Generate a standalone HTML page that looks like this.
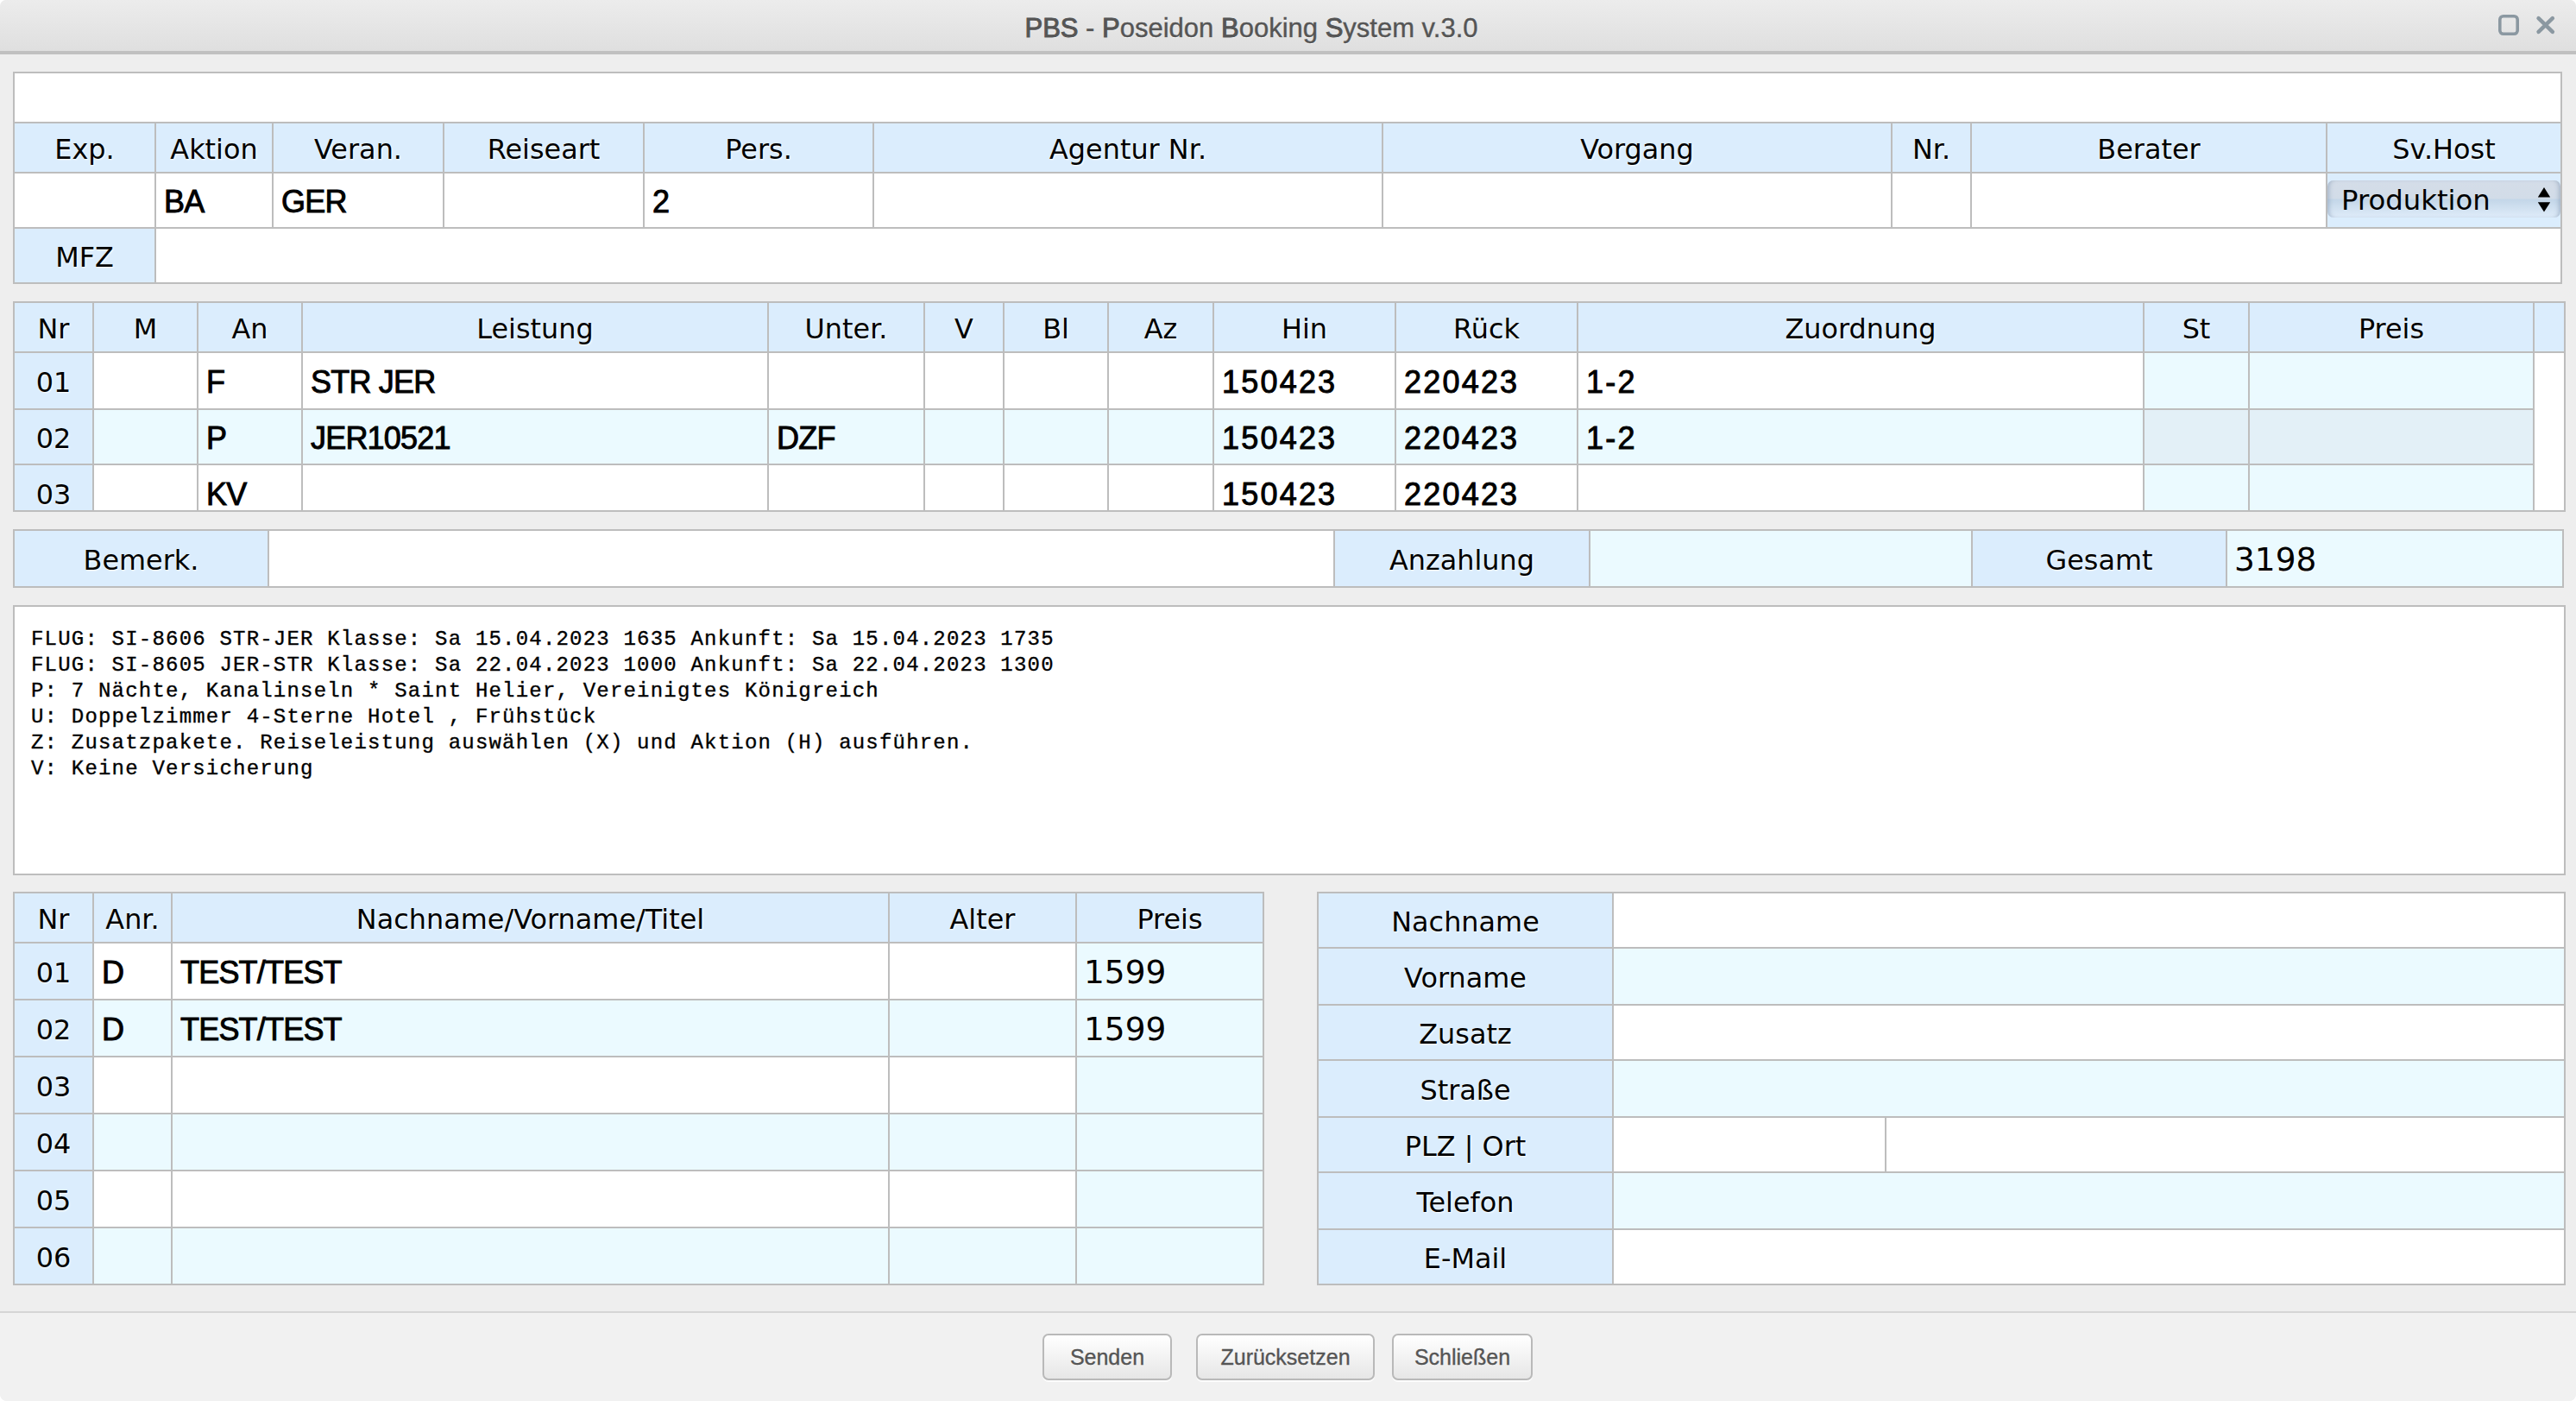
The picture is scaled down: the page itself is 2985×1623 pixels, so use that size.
<!DOCTYPE html>
<html lang="de"><head><meta charset="utf-8"><title>PBS - Poseidon Booking System v.3.0</title>
<style>
html,body{margin:0;padding:0}
html{background:#fff}
body{width:2985px;height:1623px;overflow:hidden;background:#eeeeee;border-radius:7px 7px 8px 8px;position:relative;font-family:"DejaVu Sans","Liberation Sans",sans-serif;color:#000}
div,pre,svg,span{box-sizing:border-box}
body>div,body>pre,body>svg,.clip>div{position:absolute}
.clip{overflow:hidden}
.c{display:flex;align-items:center;white-space:nowrap;overflow:hidden}
.lab{justify-content:center;font-size:31.9px;text-shadow:1px 1px 2px #fff;padding-top:3px}
.val{justify-content:flex-start;font-family:"Liberation Sans",sans-serif;font-size:36px;letter-spacing:-0.8px;padding-left:9px;padding-top:3px;-webkit-text-stroke:0.95px #000}
.num{letter-spacing:2.2px}
.big{justify-content:flex-start;font-size:37.5px;padding-left:8px;padding-top:2px;text-shadow:1px 1px 1px #fff}
#tb{left:0;top:0;width:2985px;height:59px;background:linear-gradient(#ececec,#dfdfdf);text-align:center;border-radius:7px 7px 0 0}
#tt{position:absolute;left:0;width:2900px;top:13px;text-align:center;font-family:"Liberation Sans",sans-serif;font-size:31px;line-height:40px;color:#555;text-shadow:0 1px 0 #fff;-webkit-text-stroke:0.4px #555}
#tt b{font-weight:normal;-webkit-text-stroke:1.0px #555}
#tbb{left:0;top:59px;width:2985px;height:4px;background:#c0c0c0}
#sel{left:2697px;top:209px;width:270px;height:43px}
#selb{position:absolute;left:0;top:0;width:270px;height:43px;border-radius:7px;background:linear-gradient(#d4dde8 0%,#d2dce8 49%,#c3d6e8 51%,#dfecf9 100%);box-shadow:inset 5px 0 5px -3px rgba(130,150,175,.55),inset -5px 0 5px -3px rgba(130,150,175,.55)}
#sel span{position:absolute;left:16px;top:2px;line-height:43px;font-size:32.3px}
#sel svg{position:absolute;left:243px;top:7.6px}
#ta{margin:0;background:#fff;font-family:"Liberation Mono",monospace;font-size:24px;letter-spacing:1.2px;-webkit-text-stroke:0.35px #000;line-height:30px;padding:23px 0 0 19px;color:#000}
.btn{border:2px solid #b9b9b9;border-radius:7px;background:linear-gradient(#ffffff,#e6e6e6);font-family:"Liberation Sans",sans-serif;font-size:25px;color:#555;-webkit-text-stroke:0.35px #555;display:flex;align-items:center;justify-content:center;box-shadow:0 2px 0 rgba(255,255,255,.8)}
</style></head>
<body>
<div id="tb"><span id="tt"><b>PBS</b> - <b>P</b>oseidon <b>B</b>ooking <b>S</b>ystem v.3.0</span></div>
<div id="tbb"></div>
<svg id="ic" width="80" height="40" viewBox="0 0 80 40" style="left:2890px;top:9px"><rect x="6.8" y="9.7" width="20.4" height="20.6" rx="4" ry="4" fill="none" stroke="#8b98a1" stroke-width="3.6"/><path d="M51.6 12.2 L67.8 27.8 M67.8 12.2 L51.6 27.8" stroke="#8b98a1" stroke-width="4.6" stroke-linecap="round" fill="none"/></svg>
<div style="left:15px;top:83px;width:2954px;height:246px;background:#bdbdbd;"></div>
<div class="c lab" style="left:17px;top:85px;width:2950px;height:56px;background:#fff;"></div>
<div class="c lab" style="left:17px;top:143px;width:162px;height:56px;background:#dbedfd;">Exp.</div>
<div class="c lab" style="left:181px;top:143px;width:134px;height:56px;background:#dbedfd;">Aktion</div>
<div class="c lab" style="left:317px;top:143px;width:196px;height:56px;background:#dbedfd;">Veran.</div>
<div class="c lab" style="left:515px;top:143px;width:230px;height:56px;background:#dbedfd;">Reiseart</div>
<div class="c lab" style="left:747px;top:143px;width:264px;height:56px;background:#dbedfd;">Pers.</div>
<div class="c lab" style="left:1013px;top:143px;width:588px;height:56px;background:#dbedfd;">Agentur Nr.</div>
<div class="c lab" style="left:1603px;top:143px;width:588px;height:56px;background:#dbedfd;">Vorgang</div>
<div class="c lab" style="left:2193px;top:143px;width:90px;height:56px;background:#dbedfd;">Nr.</div>
<div class="c lab" style="left:2285px;top:143px;width:410px;height:56px;background:#dbedfd;">Berater</div>
<div class="c lab" style="left:2697px;top:143px;width:270px;height:56px;background:#dbedfd;">Sv.Host</div>
<div class="c val" style="left:17px;top:201px;width:162px;height:62px;background:#fff;"></div>
<div class="c val" style="left:181px;top:201px;width:134px;height:62px;background:#fff;">BA</div>
<div class="c val" style="left:317px;top:201px;width:196px;height:62px;background:#fff;">GER</div>
<div class="c val" style="left:515px;top:201px;width:230px;height:62px;background:#fff;"></div>
<div class="c val" style="left:747px;top:201px;width:264px;height:62px;background:#fff;">2</div>
<div class="c val" style="left:1013px;top:201px;width:588px;height:62px;background:#fff;"></div>
<div class="c val" style="left:1603px;top:201px;width:588px;height:62px;background:#fff;"></div>
<div class="c val" style="left:2193px;top:201px;width:90px;height:62px;background:#fff;"></div>
<div class="c val" style="left:2285px;top:201px;width:410px;height:62px;background:#fff;"></div>
<div class="c lab" style="left:2697px;top:201px;width:270px;height:62px;background:#dbedfd;"></div>
<div class="c lab" style="left:17px;top:265px;width:162px;height:62px;background:#dbedfd;">MFZ</div>
<div class="c lab" style="left:181px;top:265px;width:2786px;height:62px;background:#fff;"></div>
<div id="sel"><div id="selb"></div><span>Produktion</span><svg width="16" height="30" viewBox="0 0 16 30"><path d="M8 0 L15.2 11.4 L0.8 11.4 Z M8 28.6 L15.2 17.2 L0.8 17.2 Z" fill="#000"/></svg></div>
<div style="left:15px;top:349px;width:2958px;height:244px;background:#bdbdbd;"></div>
<div class="clip" style="left:15px;top:349px;width:2956px;height:242px">
<div class="c lab" style="left:2px;top:2px;width:90px;height:56px;background:#dbedfd;">Nr</div>
<div class="c lab" style="left:94px;top:2px;width:119px;height:56px;background:#dbedfd;">M</div>
<div class="c lab" style="left:215px;top:2px;width:119px;height:56px;background:#dbedfd;">An</div>
<div class="c lab" style="left:336px;top:2px;width:538px;height:56px;background:#dbedfd;">Leistung</div>
<div class="c lab" style="left:876px;top:2px;width:179px;height:56px;background:#dbedfd;">Unter.</div>
<div class="c lab" style="left:1057px;top:2px;width:90px;height:56px;background:#dbedfd;">V</div>
<div class="c lab" style="left:1149px;top:2px;width:119px;height:56px;background:#dbedfd;">Bl</div>
<div class="c lab" style="left:1270px;top:2px;width:120px;height:56px;background:#dbedfd;">Az</div>
<div class="c lab" style="left:1392px;top:2px;width:209px;height:56px;background:#dbedfd;">Hin</div>
<div class="c lab" style="left:1603px;top:2px;width:209px;height:56px;background:#dbedfd;">Rück</div>
<div class="c lab" style="left:1814px;top:2px;width:654px;height:56px;background:#dbedfd;">Zuordnung</div>
<div class="c lab" style="left:2470px;top:2px;width:120px;height:56px;background:#dbedfd;">St</div>
<div class="c lab" style="left:2592px;top:2px;width:328px;height:56px;background:#dbedfd;">Preis</div>
<div class="c lab" style="left:2922px;top:2px;width:34px;height:56px;background:#dbedfd;"></div>
<div class="c lab" style="left:2px;top:60px;width:90px;height:64px;background:#dbedfd;">01</div>
<div class="c val" style="left:94px;top:60px;width:119px;height:64px;background:#fff;"></div>
<div class="c val" style="left:215px;top:60px;width:119px;height:64px;background:#fff;">F</div>
<div class="c val" style="left:336px;top:60px;width:538px;height:64px;background:#fff;">STR JER</div>
<div class="c val" style="left:876px;top:60px;width:179px;height:64px;background:#fff;"></div>
<div class="c val" style="left:1057px;top:60px;width:90px;height:64px;background:#fff;"></div>
<div class="c val" style="left:1149px;top:60px;width:119px;height:64px;background:#fff;"></div>
<div class="c val" style="left:1270px;top:60px;width:120px;height:64px;background:#fff;"></div>
<div class="c val num" style="left:1392px;top:60px;width:209px;height:64px;background:#fff;">150423</div>
<div class="c val num" style="left:1603px;top:60px;width:209px;height:64px;background:#fff;">220423</div>
<div class="c val num" style="left:1814px;top:60px;width:654px;height:64px;background:#fff;">1-2</div>
<div class="c val" style="left:2470px;top:60px;width:120px;height:64px;background:#ebfaff;"></div>
<div class="c val" style="left:2592px;top:60px;width:328px;height:64px;background:#ebfaff;"></div>
<div class="c lab" style="left:2px;top:126px;width:90px;height:62px;background:#dbedfd;">02</div>
<div class="c val" style="left:94px;top:126px;width:119px;height:62px;background:#ebfaff;"></div>
<div class="c val" style="left:215px;top:126px;width:119px;height:62px;background:#ebfaff;">P</div>
<div class="c val" style="left:336px;top:126px;width:538px;height:62px;background:#ebfaff;">JER10521</div>
<div class="c val" style="left:876px;top:126px;width:179px;height:62px;background:#ebfaff;">DZF</div>
<div class="c val" style="left:1057px;top:126px;width:90px;height:62px;background:#ebfaff;"></div>
<div class="c val" style="left:1149px;top:126px;width:119px;height:62px;background:#ebfaff;"></div>
<div class="c val" style="left:1270px;top:126px;width:120px;height:62px;background:#ebfaff;"></div>
<div class="c val num" style="left:1392px;top:126px;width:209px;height:62px;background:#ebfaff;">150423</div>
<div class="c val num" style="left:1603px;top:126px;width:209px;height:62px;background:#ebfaff;">220423</div>
<div class="c val num" style="left:1814px;top:126px;width:654px;height:62px;background:#ebfaff;">1-2</div>
<div class="c val" style="left:2470px;top:126px;width:120px;height:62px;background:#e3f0f7;"></div>
<div class="c val" style="left:2592px;top:126px;width:328px;height:62px;background:#e3f0f7;"></div>
<div class="c lab" style="left:2px;top:190px;width:90px;height:64px;background:#dbedfd;">03</div>
<div class="c val" style="left:94px;top:190px;width:119px;height:64px;background:#fff;"></div>
<div class="c val" style="left:215px;top:190px;width:119px;height:64px;background:#fff;">KV</div>
<div class="c val" style="left:336px;top:190px;width:538px;height:64px;background:#fff;"></div>
<div class="c val" style="left:876px;top:190px;width:179px;height:64px;background:#fff;"></div>
<div class="c val" style="left:1057px;top:190px;width:90px;height:64px;background:#fff;"></div>
<div class="c val" style="left:1149px;top:190px;width:119px;height:64px;background:#fff;"></div>
<div class="c val" style="left:1270px;top:190px;width:120px;height:64px;background:#fff;"></div>
<div class="c val num" style="left:1392px;top:190px;width:209px;height:64px;background:#fff;">150423</div>
<div class="c val num" style="left:1603px;top:190px;width:209px;height:64px;background:#fff;">220423</div>
<div class="c val num" style="left:1814px;top:190px;width:654px;height:64px;background:#fff;"></div>
<div class="c val" style="left:2470px;top:190px;width:120px;height:64px;background:#ebfaff;"></div>
<div class="c val" style="left:2592px;top:190px;width:328px;height:64px;background:#ebfaff;"></div>
<div style="left:2922px;top:60px;width:34px;height:300px;background:#fff"></div>
</div>
<div style="left:15px;top:613px;width:2956px;height:68px;background:#bdbdbd;"></div>
<div class="c lab" style="left:17px;top:615px;width:293px;height:64px;background:#dbedfd;">Bemerk.</div>
<div class="c lab" style="left:312px;top:615px;width:1233px;height:64px;background:#fff;"></div>
<div class="c lab" style="left:1547px;top:615px;width:294px;height:64px;background:#dbedfd;">Anzahlung</div>
<div class="c lab" style="left:1843px;top:615px;width:441px;height:64px;background:#ebfaff;"></div>
<div class="c lab" style="left:2286px;top:615px;width:293px;height:64px;background:#dbedfd;">Gesamt</div>
<div class="c big" style="left:2581px;top:615px;width:388px;height:64px;background:#ebfaff;">3198</div>
<div style="left:15px;top:701px;width:2958px;height:313px;background:#bdbdbd;"></div>
<pre id="ta" style="left:17px;top:703px;width:2954px;height:309px">FLUG: SI-8606 STR-JER Klasse: Sa 15.04.2023 1635 Ankunft: Sa 15.04.2023 1735
FLUG: SI-8605 JER-STR Klasse: Sa 22.04.2023 1000 Ankunft: Sa 22.04.2023 1300
P: 7 Nächte, Kanalinseln * Saint Helier, Vereinigtes Königreich
U: Doppelzimmer 4-Sterne Hotel , Frühstück
Z: Zusatzpakete. Reiseleistung auswählen (X) und Aktion (H) ausführen.
V: Keine Versicherung</pre>
<div style="left:15px;top:1033px;width:1450px;height:456px;background:#bdbdbd;"></div>
<div class="c lab" style="left:17px;top:1035px;width:90px;height:56px;background:#dbedfd;">Nr</div>
<div class="c lab" style="left:109px;top:1035px;width:89px;height:56px;background:#dbedfd;">Anr.</div>
<div class="c lab" style="left:200px;top:1035px;width:829px;height:56px;background:#dbedfd;">Nachname/Vorname/Titel</div>
<div class="c lab" style="left:1031px;top:1035px;width:215px;height:56px;background:#dbedfd;">Alter</div>
<div class="c lab" style="left:1248px;top:1035px;width:215px;height:56px;background:#dbedfd;">Preis</div>
<div class="c lab" style="left:17px;top:1093px;width:90px;height:64px;background:#dbedfd;">01</div>
<div class="c val" style="left:109px;top:1093px;width:89px;height:64px;background:#fff;">D</div>
<div class="c val" style="left:200px;top:1093px;width:829px;height:64px;background:#fff;">TEST/TEST</div>
<div class="c val" style="left:1031px;top:1093px;width:215px;height:64px;background:#fff;"></div>
<div class="c big" style="left:1248px;top:1093px;width:215px;height:64px;background:#ebfaff;">1599</div>
<div class="c lab" style="left:17px;top:1159px;width:90px;height:64px;background:#dbedfd;">02</div>
<div class="c val" style="left:109px;top:1159px;width:89px;height:64px;background:#ebfaff;">D</div>
<div class="c val" style="left:200px;top:1159px;width:829px;height:64px;background:#ebfaff;">TEST/TEST</div>
<div class="c val" style="left:1031px;top:1159px;width:215px;height:64px;background:#ebfaff;"></div>
<div class="c big" style="left:1248px;top:1159px;width:215px;height:64px;background:#ebfaff;">1599</div>
<div class="c lab" style="left:17px;top:1225px;width:90px;height:64px;background:#dbedfd;">03</div>
<div class="c val" style="left:109px;top:1225px;width:89px;height:64px;background:#fff;"></div>
<div class="c val" style="left:200px;top:1225px;width:829px;height:64px;background:#fff;"></div>
<div class="c val" style="left:1031px;top:1225px;width:215px;height:64px;background:#fff;"></div>
<div class="c big" style="left:1248px;top:1225px;width:215px;height:64px;background:#ebfaff;"></div>
<div class="c lab" style="left:17px;top:1291px;width:90px;height:64px;background:#dbedfd;">04</div>
<div class="c val" style="left:109px;top:1291px;width:89px;height:64px;background:#ebfaff;"></div>
<div class="c val" style="left:200px;top:1291px;width:829px;height:64px;background:#ebfaff;"></div>
<div class="c val" style="left:1031px;top:1291px;width:215px;height:64px;background:#ebfaff;"></div>
<div class="c big" style="left:1248px;top:1291px;width:215px;height:64px;background:#ebfaff;"></div>
<div class="c lab" style="left:17px;top:1357px;width:90px;height:64px;background:#dbedfd;">05</div>
<div class="c val" style="left:109px;top:1357px;width:89px;height:64px;background:#fff;"></div>
<div class="c val" style="left:200px;top:1357px;width:829px;height:64px;background:#fff;"></div>
<div class="c val" style="left:1031px;top:1357px;width:215px;height:64px;background:#fff;"></div>
<div class="c big" style="left:1248px;top:1357px;width:215px;height:64px;background:#ebfaff;"></div>
<div class="c lab" style="left:17px;top:1423px;width:90px;height:64px;background:#dbedfd;">06</div>
<div class="c val" style="left:109px;top:1423px;width:89px;height:64px;background:#ebfaff;"></div>
<div class="c val" style="left:200px;top:1423px;width:829px;height:64px;background:#ebfaff;"></div>
<div class="c val" style="left:1031px;top:1423px;width:215px;height:64px;background:#ebfaff;"></div>
<div class="c big" style="left:1248px;top:1423px;width:215px;height:64px;background:#ebfaff;"></div>
<div style="left:1526px;top:1033px;width:1447px;height:456px;background:#bdbdbd;"></div>
<div class="c lab" style="left:1528px;top:1035px;width:340px;height:62px;background:#dbedfd;">Nachname</div>
<div class="c lab" style="left:1870px;top:1035px;width:1101px;height:62px;background:#fff;"></div>
<div class="c lab" style="left:1528px;top:1099px;width:340px;height:64px;background:#dbedfd;">Vorname</div>
<div class="c lab" style="left:1870px;top:1099px;width:1101px;height:64px;background:#ebfaff;"></div>
<div class="c lab" style="left:1528px;top:1165px;width:340px;height:62px;background:#dbedfd;">Zusatz</div>
<div class="c lab" style="left:1870px;top:1165px;width:1101px;height:62px;background:#fff;"></div>
<div class="c lab" style="left:1528px;top:1229px;width:340px;height:64px;background:#dbedfd;">Straße</div>
<div class="c lab" style="left:1870px;top:1229px;width:1101px;height:64px;background:#ebfaff;"></div>
<div class="c lab" style="left:1528px;top:1295px;width:340px;height:62px;background:#dbedfd;">PLZ | Ort</div>
<div class="c lab" style="left:1870px;top:1295px;width:1101px;height:62px;background:#fff;"></div>
<div class="c lab" style="left:1528px;top:1359px;width:340px;height:64px;background:#dbedfd;">Telefon</div>
<div class="c lab" style="left:1870px;top:1359px;width:1101px;height:64px;background:#ebfaff;"></div>
<div class="c lab" style="left:1528px;top:1425px;width:340px;height:62px;background:#dbedfd;">E-Mail</div>
<div class="c lab" style="left:1870px;top:1425px;width:1101px;height:62px;background:#fff;"></div>
<div style="left:2184px;top:1295px;width:2px;height:62px;background:#bdbdbd;"></div>
<div style="left:0px;top:1519px;width:2985px;height:2px;background:#d5d5d5;"></div>
<div style="left:0px;top:1521px;width:2985px;height:102px;background:#f1f1f1;border-radius:0 0 8px 8px;"></div>
<div class="btn" style="left:1208px;top:1545px;width:150px;height:54px">Senden</div>
<div class="btn" style="left:1386px;top:1545px;width:207px;height:54px">Zurücksetzen</div>
<div class="btn" style="left:1613px;top:1545px;width:163px;height:54px">Schließen</div>
</body></html>
